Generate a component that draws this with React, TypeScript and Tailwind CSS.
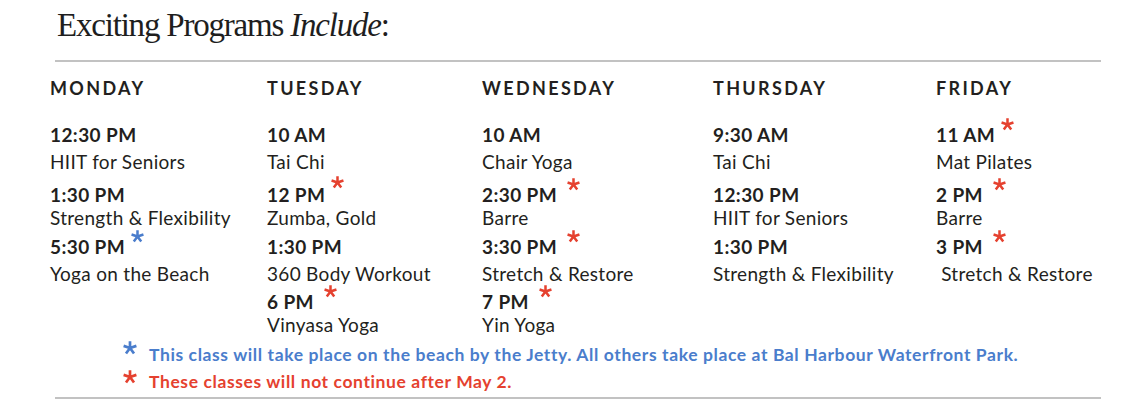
const sans = "font-['Lato','Noto_Sans',sans-serif]";

type Entry = { time: string; name: string; mark?: "red" | "blue"; gap?: boolean; up?: boolean };

const days: { day: string; items: Entry[] }[] = [
  {
    day: "MONDAY",
    items: [
      { time: "12:30 PM", name: "HIIT for Seniors" },
      { time: "1:30 PM", name: "Strength & Flexibility" },
      { time: "5:30 PM", name: "Yoga on the Beach", mark: "blue" },
    ],
  },
  {
    day: "TUESDAY",
    items: [
      { time: "10 AM", name: "Tai Chi" },
      { time: "12 PM", name: "Zumba, Gold", mark: "red", up: true },
      { time: "1:30 PM", name: "360 Body Workout" },
      { time: "6 PM", name: "Vinyasa Yoga", mark: "red", gap: true },
    ],
  },
  {
    day: "WEDNESDAY",
    items: [
      { time: "10 AM", name: "Chair Yoga" },
      { time: "2:30 PM", name: "Barre", mark: "red", gap: true },
      { time: "3:30 PM", name: "Stretch & Restore", mark: "red", gap: true },
      { time: "7 PM", name: "Yin Yoga", mark: "red", gap: true },
    ],
  },
  {
    day: "THURSDAY",
    items: [
      { time: "9:30 AM", name: "Tai Chi" },
      { time: "12:30 PM", name: "HIIT for Seniors" },
      { time: "1:30 PM", name: "Strength & Flexibility" },
    ],
  },
  {
    day: "FRIDAY",
    items: [
      { time: "11 AM", name: "Mat Pilates", mark: "red" },
      { time: "2 PM", name: "Barre", mark: "red", gap: true },
      { time: "3 PM", name: " Stretch & Restore", mark: "red", gap: true },
    ],
  },
];

// spacing of the rows is a little uneven in the printed schedule
const rows = [
  { name: "mt-[1px]", wrap: "pb-[7px]" },
  { name: "-mt-[3px]", wrap: "pb-[3px]" },
  { name: "mt-[1px]", wrap: "pb-[2px]" },
  { name: "-mt-[3px]", wrap: "" },
];

function Star({ className = "" }: { className?: string }) {
  return (
    <svg viewBox="-7 -7 14 14" className={className} fill="none" stroke="currentColor" strokeWidth={2.7}>
      <path d="M0 0V-6.8M0 0L6.4 -2.1M0 0L4 5.5M0 0L-4 5.5M0 0L-6.4 -2.1" />
    </svg>
  );
}

export default function App() {
  return (
    <div className={`w-[1143px] h-[408px] bg-white text-[#231f20] ${sans}`}>
      <h1 className="pl-[57px] pt-[6px] h-[60px] font-['Liberation_Serif',serif] text-[33px] leading-[38px] tracking-[-1.2px] text-[#1e1e1e]">
        Exciting Programs <i>Include</i>:
      </h1>
      <div className="ml-[55px] w-[1046px] h-[2px] bg-[#c2c2c2]" />

      <div className="grid grid-cols-[217px_215px_231px_223px_1fr] pl-[50px] pt-[14px] h-[279px]">
        {days.map((d) => (
          <div key={d.day}>
            <div className="text-[18px] font-bold tracking-[0.13em] leading-[24px] h-[46px]">{d.day}</div>
            {d.items.map((it, i) => (
              <div key={it.time} className={rows[i].wrap}>
                <div className="text-[19px] font-bold tracking-[0.4px] leading-[26px] whitespace-nowrap">
                  {it.time}
                  {it.mark && (
                    <Star
                      className={`inline-block align-top w-[13px] h-[13px] relative ${
                        it.mark === "red" ? "text-[#e5412f]" : "text-[#4a7dcc]"
                      } ${it.gap ? "ml-[10px]" : "ml-[6px]"} ${it.up ? "-top-[6px]" : "-top-[4px]"}`}
                    />
                  )}
                </div>
                <div className={`text-[19px] tracking-[0.3px] leading-[26px] whitespace-pre ${rows[i].name}`}>{it.name}</div>
              </div>
            ))}
          </div>
        ))}
      </div>

      <div className="pl-[123px] text-[17.5px] font-bold tracking-[0.6px] leading-[27px]">
        <div className="flex items-start text-[#4a7dcc]">
          <Star className="w-[14px] h-[14px] mr-[12px] shrink-0" />
          <span>This class will take place on the beach by the Jetty. All others take place at Bal Harbour Waterfront Park.</span>
        </div>
        <div className="flex items-start text-[#e5412f]">
          <Star className="w-[14px] h-[14px] mr-[12px] mt-[2px] shrink-0" />
          <span>These classes will not continue after May 2.</span>
        </div>
      </div>
      <div className="ml-[55px] mt-[2px] w-[1046px] h-[2px] bg-[#c2c2c2]" />
    </div>
  );
}
